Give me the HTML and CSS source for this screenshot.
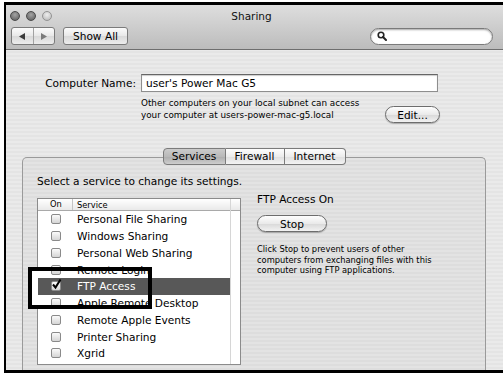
FILE: index.html
```html
<!DOCTYPE html>
<html lang="en">
<head>
  <meta charset="UTF-8">
  <title>Sharing</title>
  <link rel="stylesheet" href="styles.css">
</head>
<body>
  <div class="frame">
    <div class="window-top">
      <div class="title-row">
        <div class="lights">
          <span class="light dark"></span>
          <span class="light dark"></span>
          <span class="light"></span>
        </div>
        <div class="title">Sharing</div>
        <div></div>
      </div>
      <div class="toolbar">
        <div class="nav">
          <span class="seg"><svg width="7" height="7" viewBox="0 0 7 7"><path d="M0 3.5 L6 0 L6 7 Z" fill="#3a3a3a"/></svg></span>
          <span class="seg"><svg width="7" height="7" viewBox="0 0 7 7"><path d="M7 3.5 L1 0 L1 7 Z" fill="#7a7a7a"/></svg></span>
        </div>
        <button class="tool-btn">Show All</button>
        <div class="search">
          <svg width="10" height="10" viewBox="0 0 10 10"><circle cx="4" cy="4" r="2.8" fill="none" stroke="#222" stroke-width="1.6"/><path d="M6 6 L9 9" stroke="#222" stroke-width="2" stroke-linecap="round"/></svg>
        </div>
      </div>
    </div>

    <div class="content">
      <div class="name-row">
        <span class="name-label">Computer Name:</span>
        <div class="name-input">user's Power Mac G5</div>
      </div>
      <div class="info-row">
        <p class="info-text">Other computers on your local subnet can access<br>your computer at users-power-mac-g5.local</p>
        <button class="pill edit">Edit...</button>
      </div>

      <div class="tabs">
        <span class="tab active services">Services</span>
        <span class="tab firewall">Firewall</span>
        <span class="tab internet">Internet</span>
      </div>
      <div class="tabbox">
        <p class="prompt">Select a service to change its settings.</p>
        <div class="panes">
          <div class="list-wrap">
            <div class="list">
              <div class="list-main">
                <div class="list-head">
                  <span class="col-on">On</span>
                  <span class="col-name">Service</span>
                </div>
                <div class="row"><span class="col-on"><span class="check"></span></span><span class="col-name">Personal File Sharing</span></div>
                <div class="row"><span class="col-on"><span class="check"></span></span><span class="col-name">Windows Sharing</span></div>
                <div class="row"><span class="col-on"><span class="check"></span></span><span class="col-name">Personal Web Sharing</span></div>
                <div class="row"><span class="col-on"><span class="check"></span></span><span class="col-name">Remote Login</span></div>
                <div class="row selected"><span class="col-on"><span class="check checked"><svg width="11" height="11" viewBox="0 0 11 11"><path d="M2 5.5 L4.5 8.5 L9.5 0.5" fill="none" stroke="#000" stroke-width="2"/></svg></span></span><span class="col-name">FTP Access</span></div>
                <div class="row"><span class="col-on"><span class="check"></span></span><span class="col-name">Apple Remote Desktop</span></div>
                <div class="row"><span class="col-on"><span class="check"></span></span><span class="col-name">Remote Apple Events</span></div>
                <div class="row"><span class="col-on"><span class="check"></span></span><span class="col-name">Printer Sharing</span></div>
                <div class="row"><span class="col-on"><span class="check"></span></span><span class="col-name">Xgrid</span></div>
              </div>
              <div class="list-side">
                <div class="list-head"></div>
              </div>
            </div>
            <div class="callout"></div>
          </div>

          <div class="detail">
            <p class="detail-title">FTP Access On</p>
            <button class="pill stop">Stop</button>
            <p class="detail-text">Click Stop to prevent users of other<br>computers from exchanging files with this<br>computer using FTP applications.</p>
          </div>
        </div>
      </div>
    </div>
  </div>
</body>
</html>
```

FILE: styles.css
```css
body {
  margin: 0;
  font-family: "DejaVu Sans", sans-serif;
  color: #000;
  background: #fff;
}

.frame {
  margin: 2px 0 0 4px;
  border: solid #000;
  border-width: 3px 0 3px 2px;
  height: 365px;
  overflow: hidden;
  background: repeating-linear-gradient(#eaeaea 0 2px, #e4e4e4 2px 4px);
}

/* title bar + toolbar */
.window-top {
  height: 45px;
  box-sizing: border-box;
  padding: 0 10px 0 4px;
  background: linear-gradient(#dedede, #bcbcbc);
  border-bottom: 1px solid #6e6e6e;
}

.title-row {
  display: grid;
  grid-template-columns: 1fr auto 1fr;
  align-items: center;
  height: 21px;
}

.lights {
  display: flex;
  gap: 6px;
}

.light {
  width: 10px;
  height: 10px;
  box-sizing: border-box;
  border-radius: 50%;
  border: 1px solid #939393;
  background: radial-gradient(circle at 50% 35%, #eeeeee, #b4b4b4);
}

.light.dark {
  border-color: #4a4a4a;
  background: radial-gradient(circle at 50% 35%, #a4a4a4, #5a5a5a);
}

.title { font-size: 10.5px; color: #111; }

.toolbar {
  display: flex;
  align-items: center;
  margin-top: 1px;
  padding-left: 1px;
}

.nav, .tool-btn {
  height: 18px;
  box-sizing: border-box;
  border: 1px solid #7b7b7b;
  border-radius: 3px;
  background: linear-gradient(#fbfbfb, #e8e8e8 50%, #d9d9d9 51%, #ececec);
}

.nav {
  display: flex;
  width: 44px;
}

.seg {
  flex: 1;
  display: flex;
  align-items: center;
  justify-content: center;
}

.seg + .seg { border-left: 1px solid #a2a2a2; }

.tool-btn {
  margin-left: 8px;
  width: 65px;
  padding: 0;
  font: 10.6px "DejaVu Sans", sans-serif;
  color: #000;
}

.search {
  margin-left: auto;
  width: 123px;
  height: 17px;
  box-sizing: border-box;
  padding-left: 6px;
  display: flex;
  align-items: center;
  border: 1px solid #7a7a7a;
  border-radius: 9px;
  background: #fff;
  box-shadow: inset 0 1px 2px rgba(0,0,0,0.35);
}

/* computer name */
.name-row {
  display: flex;
  align-items: center;
  margin-top: 24px;
}

.name-label {
  width: 130px;
  text-align: right;
  font-size: 10.6px;
}

.name-input {
  margin-left: 5px;
  width: 297px;
  height: 18px;
  box-sizing: border-box;
  padding: 0 4px;
  border: 1px solid #8e8e8e;
  border-top-color: #666;
  background: #fff;
  box-shadow: inset 0 1px 1px rgba(0,0,0,0.2);
  font-size: 10.6px;
  line-height: 16px;
}

.info-row {
  display: flex;
  align-items: flex-start;
  width: 299px;
  margin: 5px 0 0 135px;
}

.info-text {
  margin: 0;
  font-size: 8.8px;
  line-height: 12px;
}

.pill {
  padding: 0;
  border: 1px solid #6d6d6d;
  border-radius: 9px;
  background: linear-gradient(#fefefe, #eaeaea 50%, #d8d8d8 51%, #f2f2f2);
  box-shadow: 0 1px 1px rgba(0,0,0,0.25);
  font: 10.6px "DejaVu Sans", sans-serif;
  color: #000;
}

.edit {
  margin: 9px 0 0 auto;
  width: 55px;
  height: 17px;
}

/* tabs */
.tabs {
  position: relative;
  z-index: 1;
  display: flex;
  justify-content: center;
  margin: 25px 17px 0 16px;
}

.tab {
  height: 17px;
  box-sizing: border-box;
  border: 1px solid #7b7b7b;
  border-left: none;
  text-align: center;
  font-size: 10.6px;
  line-height: 15px;
  background: linear-gradient(#fdfdfd, #ececec 50%, #dedede 51%, #f3f3f3);
}

.tab:first-child {
  border-left: 1px solid #7b7b7b;
  border-radius: 4px 0 0 4px;
}

.tab:last-child { border-radius: 0 4px 4px 0; }

.tab.active {
  background: linear-gradient(#cbcbcb, #b9b9b9 50%, #acacac 51%, #cdcdcd);
}

.services { width: 63px; }
.firewall { width: 59px; }
.internet { width: 61px; }

.tabbox {
  margin: -8px 17px 0 16px;
  height: 230px;
  padding: 16px 14px 0;
  border: 1px solid #9a9a9a;
  border-bottom: none;
  border-radius: 5px 5px 0 0;
  background: repeating-linear-gradient(#e3e3e3 0 2px, #dddddd 2px 4px);
}

.prompt {
  margin: 0;
  font-size: 10.6px;
  line-height: 14px;
}

.panes {
  display: flex;
  align-items: flex-start;
  gap: 16px;
  margin-top: 10px;
}

/* service list */
.list-wrap { position: relative; }

.list {
  display: flex;
  width: 204px;
  height: 167px;
  box-sizing: border-box;
  border: 1px solid #8b8b8b;
  background: #fff;
}

.list-main { flex: 1; }

.list-side {
  width: 9px;
  border-left: 1px solid #d6d6d6;
}

.list-head {
  display: flex;
  align-items: center;
  height: 12px;
  box-sizing: border-box;
  border-bottom: 1px solid #a9a9a9;
  background: linear-gradient(#ffffff, #e9e9e9);
  font-size: 8.3px;
}

.list-head .col-on {
  padding-left: 12px;
  border-right: 1px solid #c4c4c4;
  line-height: 11px;
}

.col-on {
  width: 35px;
  box-sizing: border-box;
  padding-left: 13px;
  display: flex;
  align-items: center;
}

.col-name { padding-left: 4px; }

.row {
  display: flex;
  align-items: center;
  height: 16.75px;
  font-size: 10.6px;
  white-space: nowrap;
}

.row.selected {
  background: #585858;
  color: #fff;
}

.check {
  position: relative;
  width: 10px;
  height: 10px;
  box-sizing: border-box;
  border: 1px solid #8a8a8a;
  border-radius: 2px;
  background: linear-gradient(#fbfbfb, #d5d5d5);
}

.check svg {
  position: absolute;
  left: -1px;
  top: -3px;
}

.callout {
  position: absolute;
  left: -9px;
  top: 69px;
  width: 124px;
  height: 42px;
  box-sizing: border-box;
  border: 4px solid #000;
  background: linear-gradient(to right, #fff 6px, transparent 6px);
}

/* detail pane */
.detail { margin-top: -6px; }

.detail-title {
  margin: 0;
  font-size: 10.6px;
  line-height: 14px;
}

.stop {
  margin-top: 9px;
  width: 70px;
  height: 17px;
}

.detail-text {
  margin: 12px 0 0;
  font-size: 8.3px;
  line-height: 10.5px;
}
```
